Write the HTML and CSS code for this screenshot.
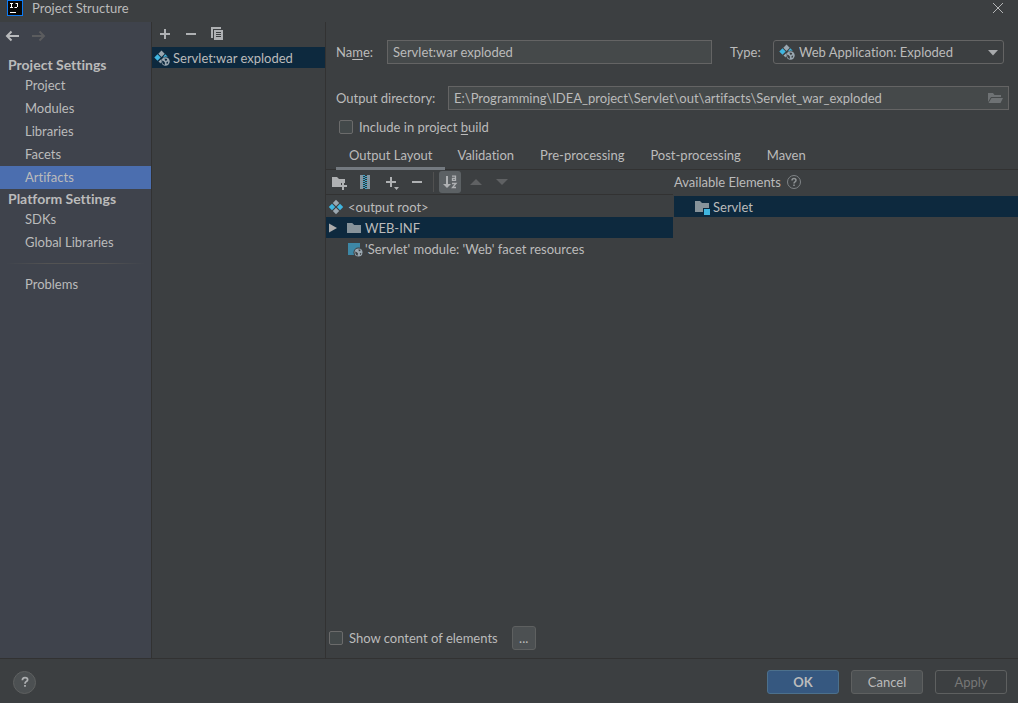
FILE: index.html
```html
<!DOCTYPE html>
<html lang="en">
<head>
<meta charset="utf-8">
<title>Project Structure</title>
<link rel="stylesheet" href="styles.css">
</head>
<body>
<svg class="symbols" aria-hidden="true">
  <symbol id="artifact" viewBox="0 0 16 16">
    <path fill="#9aa7b0" d="M8 .8l3.200 3.200L8 7.200 4.800 4z M8 8.800l3.200 3.200L8 15.200 4.800 12z"/>
    <path fill="#40b6e0" d="M4 4.800L7.200 8 4 11.200.8 8z M12 4.800L15.200 8 12 11.200 8.800 8z"/>
  </symbol>
  <symbol id="globe" viewBox="0 0 9 9">
    <circle cx="4.5" cy="4.5" r="4" fill="#9aa7b0"/>
    <path class="land" d="M1.300 3.600l1.500.7 1.200 1.300-.4 2.200C2 7.300 1 5.800 1.300 3.600z M4.400 1.300l2.200.5-.4 1.300-1.300.2z M5.800 5.200l1.500-.3-.4 1.500-.8.400z"/>
  </symbol>
  <symbol id="exploded" viewBox="0 0 16 16">
    <path fill="#9aa7b0" d="M7.500 .5l3.200 3.200-3.200 3.200-3.200-3.200z M4.500 11.500L7.500 9l-.8 4.500z"/>
    <path fill="#40b6e0" d="M3.500 4.300l3.200 3.200-3.200 3.200L.3 7.500z M11.200 4.300l2.600 2.400-2.500-.2-2.600 1.200z"/>
    <circle cx="11.500" cy="11.500" r="4.200" fill="#9aa7b0"/>
    <path class="land" d="M8.200 10.500l1.600.700 1.200 1.500-.3 2.200c-2-.5-3-2.200-2.500-4.400z M10.500 8.600l2.600.3-.2 1.600-1.800.2z M12.500 12l1.700-.4-.5 1.900-1 .4z"/>
  </symbol>
  <symbol id="folder" viewBox="0 0 16 16"><path d="M1 3h5.200l2 2H15v8H1z"/></symbol>
  <symbol id="plus" viewBox="0 0 16 16"><path d="M7 3h2v4h4v2H9v4H7V9H3V7h4z"/></symbol>
  <symbol id="minus" viewBox="0 0 16 16"><path d="M3 7h10v2H3z"/></symbol>
</svg>
<div class="dialog">
  <header class="titlebar">
    <svg class="logo" viewBox="0 0 16 16" aria-hidden="true"><path fill="#0b7bf6" d="M0 0h16v16H0z"/><path fill="#080808" d="M1 1h14v14H1z"/><path fill="none" stroke="#fff" d="M3 3.500h3M4.500 3v5M3 7.500h3M8.500 3.500h2.500M10.500 3v4M7.500 7.500H10M3 12.500h6"/></svg>
    <h1 class="title">Project Structure</h1>
    <button class="tool close" aria-label="Close"><svg class="icon" viewBox="0 0 16 16"><path fill="none" stroke="#b4b6b7" d="M3 3l10 10M13 3L3 13"/></svg></button>
  </header>
  <main class="main">
    <nav class="sidebar">
      <div class="history">
        <button class="tool" aria-label="Back"><svg class="icon" viewBox="0 0 16 16"><path fill="none" stroke="#b8babc" stroke-width="2" d="M15 8H3M7.500 3.500L3 8l4.500 4.500"/></svg></button>
        <button class="tool" aria-label="Forward" disabled><svg class="icon" viewBox="0 0 16 16"><path fill="none" stroke="#5b5c5e" stroke-width="2" d="M2 8h12M9.500 3.500L14 8l-4.500 4.500"/></svg></button>
      </div>
      <h2 class="group">Project Settings</h2>
      <a class="item" href="#project">Project</a>
      <a class="item" href="#modules">Modules</a>
      <a class="item" href="#libraries">Libraries</a>
      <a class="item" href="#facets">Facets</a>
      <a class="item selected" href="#artifacts" aria-current="page">Artifacts</a>
      <h2 class="group">Platform Settings</h2>
      <a class="item" href="#sdks">SDKs</a>
      <a class="item" href="#global">Global Libraries</a>
      <div class="divider"></div>
      <a class="item" href="#problems">Problems</a>
    </nav>
    <section class="artifacts">
      <div class="list-tools">
        <button class="tool" aria-label="Add"><svg class="icon"><use href="#plus"/></svg></button>
        <button class="tool" aria-label="Remove"><svg class="icon"><use href="#minus"/></svg></button>
        <button class="tool" aria-label="Copy"><svg class="icon" viewBox="0 0 16 16"><path d="M2 1h10v2H4v9H2z"/><path fill-rule="evenodd" d="M5 4h9v10H5zM7 6v1h5V6zM7 8v1h5V8zM7 10v1h5v-1z"/></svg></button>
      </div>
      <div class="artifact-row"><svg class="icon on-selection"><use href="#exploded"/></svg><span>Servlet:war exploded</span></div>
    </section>
    <section class="editor">
      <div class="form">
        <div class="name-row">
          <label for="name">Na<u>m</u>e:</label>
          <input class="field name-field" id="name" type="text" value="Servlet:war exploded">
          <label class="type-label" for="type">Type:</label>
          <div class="select-box">
            <select class="type-select" id="type"><option>Web Application: Exploded</option></select>
            <svg class="icon select-icon"><use href="#exploded"/></svg>
            <svg class="select-arrow" viewBox="0 0 10 6"><path d="M0 0h10L5 5.500z"/></svg>
          </div>
        </div>
        <div class="directory-row">
          <label for="directory">Output directory:</label>
          <div class="directory-box">
            <input class="field" id="directory" type="text" value="E:\Programming\IDEA_project\Servlet\out\artifacts\Servlet_war_exploded">
            <button class="tool browse" aria-label="Browse"><svg class="icon" viewBox="0 0 16 16"><path d="M1 3h5l1.500 2H14v2H4l-3 5z"/><path d="M4.500 8H16l-2.500 5H1.500z"/></svg></button>
          </div>
        </div>
        <label class="check-row build-check"><input class="check" type="checkbox"><span>Include in project <u>b</u>uild</span></label>
      </div>
      <div class="tabs" role="tablist">
        <button class="tab active" role="tab" aria-selected="true">Output Layout</button>
        <button class="tab" role="tab">Validation</button>
        <button class="tab" role="tab">Pre-processing</button>
        <button class="tab" role="tab">Post-processing</button>
        <button class="tab" role="tab">Maven</button>
      </div>
      <div class="panes">
        <section class="layout-pane">
          <div class="layout-tools">
            <button class="tool" aria-label="New folder"><svg class="icon" viewBox="0 0 16 16"><path d="M1 3h5l2 2h6v4h-4v2H8v2H1z"/><path d="M11 8h2v3h3v2h-3v3h-2v-3H8v-2h3z"/></svg></button>
            <button class="tool" aria-label="New archive"><svg class="icon" viewBox="0 0 16 16"><path fill="#8496a1" d="M3 1h10v14H3z"/><path fill="#30363a" d="M6 1h4v14H6z"/><path fill="none" stroke="#40a6cb" stroke-width="2" stroke-dasharray="1 1" d="M7 1v14M9 2v13"/></svg></button>
            <button class="tool" aria-label="Add copy of"><svg class="icon" viewBox="0 0 16 16"><path d="M7 3h2v4h4v2H9v4H7V9H3V7h4zM11 13h5l-2.500 3z"/></svg></button>
            <button class="tool" aria-label="Remove"><svg class="icon"><use href="#minus"/></svg></button>
            <span class="tool-divider"></span>
            <button class="tool pressed" aria-label="Sort by name" aria-pressed="true"><svg class="icon" viewBox="0 0 16 16"><path d="M4 2h2v8h3l-4 4-4-4h3z"/><path fill="none" stroke="#afb1b3" stroke-width="1.300" d="M10 2.200h3.500V7M13.500 4.300h-3v2h3M10 9.500h4l-3.500 4H14"/></svg></button>
            <button class="tool" aria-label="Move up" disabled><svg class="icon" viewBox="0 0 16 16"><path fill="#5f6163" d="M2 11h12L8 5z"/></svg></button>
            <button class="tool" aria-label="Move down" disabled><svg class="icon" viewBox="0 0 16 16"><path fill="#5f6163" d="M2 5h12l-6 6z"/></svg></button>
          </div>
          <div class="tree">
            <div class="tree-row root"><svg class="icon"><use href="#artifact"/></svg><span>&lt;output root&gt;</span></div>
            <div class="tree-row highlighted"><svg class="arrow" viewBox="0 0 8 10"><path d="M0 .5L8 5 0 9.500z"/></svg><svg class="icon folder-icon"><use href="#folder"/></svg><span>WEB-INF</span></div>
            <div class="tree-row nested"><svg class="icon" viewBox="0 0 16 16"><path fill="#3d87a5" d="M1 2h12v12H1z"/><circle cx="11.500" cy="11.500" r="5" fill="#3c3f41"/><svg x="7" y="7" width="9" height="9"><use href="#globe"/></svg></svg><span>'Servlet' module: 'Web' facet resources</span></div>
          </div>
        </section>
        <section class="available-pane">
          <div class="available-title"><h2 class="available-name">Available Elements</h2><svg class="icon" viewBox="0 0 16 16"><circle cx="8" cy="8" r="6.500" fill="none" stroke="#808487"/><path fill="none" stroke="#8f9395" stroke-width="1.500" d="M6 6.500q0-2 2-2t2 1.800q0 1-1 1.600T8 9.500M8 10.500V12"/></svg></div>
          <div class="available-row"><svg class="icon folder-icon" viewBox="0 0 16 16"><path d="M1 2h5l2 2h7v5h-6v4H1z"/><path fill="#40b6e0" d="M10 10h6v6h-6z"/></svg><span>Servlet</span></div>
        </section>
      </div>
      <div class="content-row">
        <label class="check-row"><input class="check" type="checkbox"><span>Show content of elements</span></label>
        <button class="more">...</button>
      </div>
    </section>
  </main>
  <footer class="footer">
    <button class="help" aria-label="Help"><svg class="icon" viewBox="0 0 16 16"><path fill="none" stroke="#afb1b3" stroke-width="2" d="M5 6q0-3 3-3t3 2.500q0 1.300-1.500 2T8 10M8 11.500v2"/></svg></button>
    <button class="button primary">OK</button>
    <button class="button">Cancel</button>
    <button class="button" disabled>Apply</button>
  </footer>
</div>
</body>
</html>
```
FILE: styles.css
```css
* { box-sizing: border-box; }

body {
  margin: 0;
  background: #3c3f41;
  color: #bbbbbb;
  font: 13px/20px Lato, "Noto Sans", sans-serif;
  font-variant-ligatures: none;
}

button, input, select { margin: 0; color: inherit; font: inherit; }
h1, h2 { margin: 0; font-size: inherit; font-weight: 400; }
label, span, h1, h2 { white-space: nowrap; }
u { text-underline-offset: 2px; }

.symbols { position: absolute; width: 0; height: 0; }
.dialog { display: flex; flex-direction: column; min-height: 100vh; }

.icon { display: block; flex: none; width: 16px; height: 16px; fill: #afb1b3; --land: #3c3f41; }
.on-selection { --land: #0d293e; }
.land { fill: var(--land); }
.folder-icon { fill: #87939a; }

.tool {
  display: flex;
  align-items: center;
  justify-content: center;
  flex: none;
  width: 22px;
  height: 22px;
  padding: 0;
  border: 0;
  border-radius: 3px;
  background: none;
}
.tool.pressed { background: #5c6164; }

.titlebar { display: flex; align-items: center; height: 22px; padding: 0 9px 6px 7px; }
.logo { width: 16px; height: 16px; margin-right: 9px; }
.title { flex: 1; }

.main { display: flex; flex: 1; border-bottom: 1px solid #323232; }

.sidebar { width: 152px; flex: none; border-right: 1px solid #323232; background: #3f434c; }
.history { display: flex; gap: 4px; height: 33px; padding: 3px 1px; }
.group { height: 19px; padding-left: 8px; font-size: 14px; font-weight: 700; line-height: 19px; }
.item { display: block; height: 23px; padding-left: 25px; color: inherit; line-height: 23px; text-decoration: none; }
.item.selected { background: #4b6eaf; }
.divider { height: 1px; margin: 9px 6px; background: linear-gradient(90deg, transparent, #535353 30%, #535353 70%, transparent); }

.artifacts { width: 174px; flex: none; border-right: 1px solid #323232; }
.list-tools { display: flex; gap: 4px; padding: 1px 2px 2px; }
.artifact-row { display: flex; align-items: center; gap: 3px; height: 21px; padding-left: 2px; background: #0d293e; }

.editor { display: flex; flex-direction: column; flex: 1; min-width: 0; }
.form { padding: 18px 9px 0 10px; }
.name-row { display: flex; align-items: center; padding-right: 5px; }
.name-row label:first-child { width: 51px; }
.field {
  display: block;
  width: 100%;
  height: 24px;
  padding: 0 5px 1px;
  border: 1px solid #646464;
  border-radius: 0;
  background: #45494a;
}
.name-field { flex: 1; min-width: 0; }
.type-label { width: 61px; padding-left: 18px; }
.select-box { position: relative; width: 231px; }
.type-select {
  display: block;
  width: 100%;
  height: 24px;
  padding: 0 24px 0 25px;
  border: 1px solid #646464;
  border-radius: 3px;
  background: #3c3f41;
  appearance: none;
}
.select-icon { position: absolute; top: 4px; left: 6px; pointer-events: none; }
.select-arrow { position: absolute; top: 10px; right: 6px; width: 10px; height: 6px; fill: #a8aaac; pointer-events: none; }

.directory-row { display: flex; align-items: center; margin-top: 22px; }
.directory-row label { width: 112px; }
.directory-box { position: relative; flex: 1; }
.browse { position: absolute; top: 1px; right: 3px; }
.browse .icon { fill: #6e7274; }

.check-row { display: flex; align-items: center; gap: 6px; }
.build-check { padding: 7px 3px 0; }
.check {
  width: 14px;
  height: 14px;
  border: 1px solid #6b6b6b;
  border-radius: 2px;
  background: #43494a;
  appearance: none;
}

.tabs { display: flex; height: 33px; padding-left: 10px; border-bottom: 1px solid #323232; }
.tab { height: 33px; padding: 8px 13px 5px; border: 0; background: none; }
.tab.active { padding: 8px 12px 2px 13px; border-bottom: 3px solid #747a80; }

.panes { display: flex; flex: 1; gap: 1px; }
.layout-pane, .available-pane { min-width: 0; }
.layout-pane { flex: 347 1 0; }
.available-pane { flex: 344 1 0; }
.layout-tools { display: flex; align-items: center; gap: 4px; height: 25px; padding-left: 2px; border-bottom: 1px solid #323232; }
.tool-divider { width: 1px; height: 20px; margin: 0 1px; background: #515151; }
.tree { padding-top: 1px; }
.tree-row { display: flex; align-items: center; gap: 3px; height: 21px; padding-left: 3px; }
.tree-row.root { padding-left: 2px; gap: 4px; }
.tree-row.highlighted { background: #0d293e; }
.tree-row.nested { padding-left: 21px; gap: 2px; }
.arrow { width: 8px; height: 10px; margin-right: 6px; fill: #adadad; }
.available-title { display: flex; align-items: center; gap: 5px; height: 26px; padding-bottom: 2px; }
.available-row { display: flex; align-items: center; gap: 3px; height: 21px; padding-left: 20px; background: #0d293e; }

.content-row { display: flex; align-items: center; gap: 14px; padding: 0 3px 8px; }
.more { width: 24px; height: 24px; padding: 0; border: 1px solid #5e6060; border-radius: 3px; background: #4c5052; }

.footer { display: flex; align-items: center; gap: 12px; height: 44px; padding: 2px 11px 0 13px; }
.help {
  display: flex;
  align-items: center;
  justify-content: center;
  width: 23px;
  height: 23px;
  margin-right: auto;
  padding: 0;
  border: 1px solid #5e6060;
  border-radius: 50%;
  background: #4c5052;
}
.help .icon { width: 14px; height: 14px; }
.button { width: 72px; height: 24px; padding: 0; border: 1px solid #5e6060; border-radius: 3px; background: #4c5052; line-height: 20px; }
.button.primary { border-color: #4c708c; background: #365880; font-weight: 700; }
.button:disabled { background: none; color: #777777; }
```
